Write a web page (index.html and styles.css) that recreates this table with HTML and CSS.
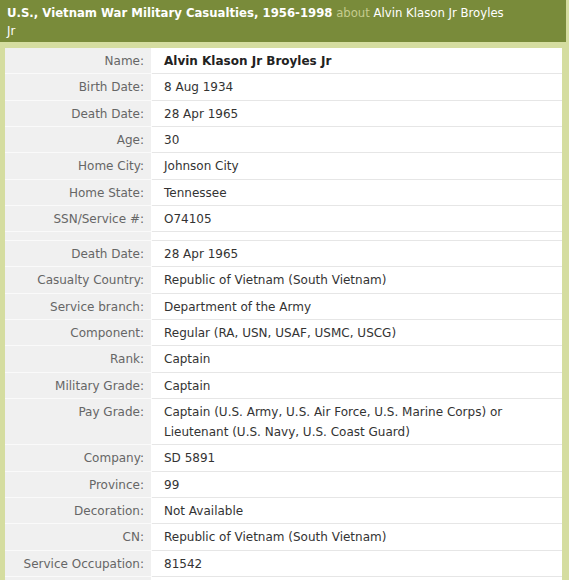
FILE: index.html
```html
<!DOCTYPE html>
<html lang="en">
<head>
<meta charset="utf-8">
<title>U.S., Vietnam War Military Casualties</title>
<link rel="stylesheet" href="styles.css">
</head>
<body>
<div class="frame">
  <h1 class="header"><span class="db">U.S., Vietnam War Military Casualties, 1956-1998</span> <span class="about">about</span> <span class="nm">Alvin Klason Jr Broyles</span> <span class="nm">Jr</span></h1>
  <div class="content">
    <table class="record">
      <tr><th>Name:</th><td><strong>Alvin Klason Jr Broyles Jr</strong></td></tr>
      <tr><th>Birth Date:</th><td>8 Aug 1934</td></tr>
      <tr><th>Death Date:</th><td>28 Apr 1965</td></tr>
      <tr><th>Age:</th><td>30</td></tr>
      <tr><th>Home City:</th><td>Johnson City</td></tr>
      <tr><th>Home State:</th><td>Tennessee</td></tr>
      <tr><th>SSN/Service #:</th><td>O74105</td></tr>
      <tr class="spacer"><th></th><td></td></tr>
      <tr><th>Death Date:</th><td>28 Apr 1965</td></tr>
      <tr><th>Casualty Country:</th><td>Republic of Vietnam (South Vietnam)</td></tr>
      <tr><th>Service branch:</th><td>Department of the Army</td></tr>
      <tr><th>Component:</th><td>Regular (RA, USN, USAF, USMC, USCG)</td></tr>
      <tr><th>Rank:</th><td>Captain</td></tr>
      <tr><th>Military Grade:</th><td>Captain</td></tr>
      <tr><th>Pay Grade:</th><td>Captain (U.S. Army, U.S. Air Force, U.S. Marine Corps) or Lieutenant (U.S. Navy, U.S. Coast Guard)</td></tr>
      <tr><th>Company:</th><td>SD 5891</td></tr>
      <tr><th>Province:</th><td>99</td></tr>
      <tr><th>Decoration:</th><td>Not Available</td></tr>
      <tr><th>CN:</th><td>Republic of Vietnam (South Vietnam)</td></tr>
      <tr><th>Service Occupation:</th><td>81542</td></tr>
      <tr><th>&nbsp;</th><td>&nbsp;</td></tr>
    </table>
  </div>
</div>
</body>
</html>
```

FILE: styles.css
```css
html, body {
  margin: 0;
  padding: 0;
  background: #d5dda0;
}
body {
  font-family: "DejaVu Sans", Verdana, sans-serif;
  font-size: 12px;
  color: #333;
}
.frame {
  background: #d5dda0;
  min-height: 580px;
}
.header {
  margin: 0 3px 0 0;
  background: #798b3a;
  color: #fff;
  font-size: 11.7px;
  font-weight: normal;
  line-height: 18px;
  padding: 4px 56px 2px 7px;
}
.header .db {
  font-weight: bold;
}
.header .about {
  color: #c6cc8e;
}
.content {
  padding: 6px 7px 0 5px;
}
.record {
  width: 100%;
  border-collapse: collapse;
  border-spacing: 0;
  background: #fff;
}
.record th,
.record td {
  line-height: 20px;
  padding: 3px 0 2.33px;
  vertical-align: top;
}
.record th {
  width: 139px;
  padding-right: 7px;
  text-align: right;
  font-weight: normal;
  color: #666;
  background: #f0f0f0;
  border-bottom: 1px solid #fafafa;
  border-right: 1px solid #fff;
}
.record td {
  padding-left: 12px;
  color: #333;
  background: #fff;
  border-bottom: 1px solid #e6e6e6;
}
.record strong {
  color: #222;
}
.record .spacer th,
.record .spacer td {
  padding: 0;
  height: 7.67px;
  line-height: 0;
  font-size: 0;
}
```
